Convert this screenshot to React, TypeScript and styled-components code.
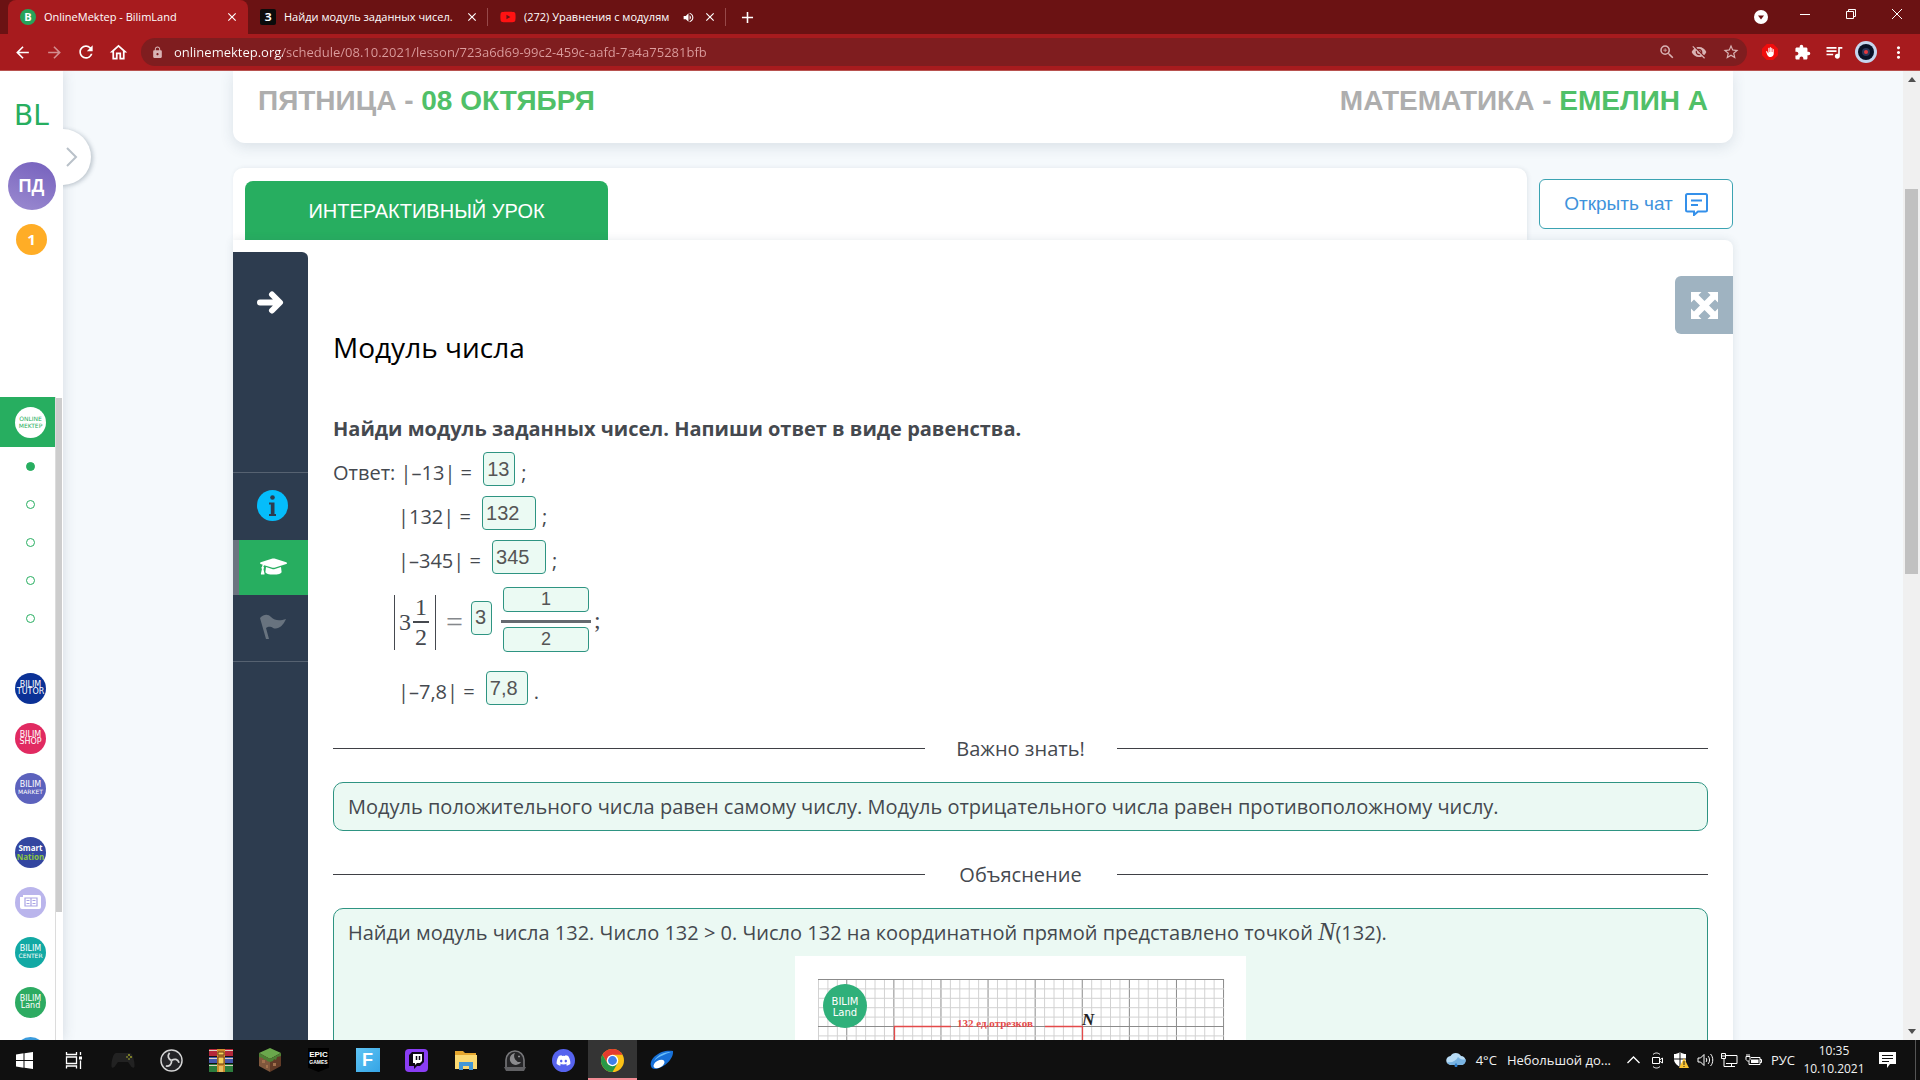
import React from "react";
import styled, { createGlobalStyle, css } from "styled-components";
import {
  MdArrowBack, MdArrowForward, MdRefresh, MdOutlineHome, MdLock, MdZoomIn, MdVisibilityOff,
  MdStarBorder, MdExtension, MdQueueMusic, MdMoreVert, MdClose, MdAdd, MdVolumeUp, MdBackHand,
} from "react-icons/md";
import { FaGraduationCap, FaDiscord, FaYoutube } from "react-icons/fa";

const ui = `"Open Sans", "Noto Sans", sans-serif`;
const arial = `"Liberation Sans", Arial, sans-serif`;
const serif = `"Liberation Serif", "Times New Roman", serif`;
const green = "#27ae60";

const Global = createGlobalStyle`
  * { box-sizing: border-box; }
  body { margin: 0; background: #f5f9fc; font-family: ${ui}; }
  button { border: 0; padding: 0; background: none; font: inherit; color: inherit; cursor: pointer; }
  p, h1, h2, h3 { margin: 0; }
  svg { display: block; flex: none; }
`;

const Screen = styled.div`
  display: flex;
  flex-direction: column;
  height: 100vh;
  overflow: hidden;
`;

/* ---------- browser chrome ---------- */
const TabStrip = styled.header`
  display: flex;
  align-items: stretch;
  height: 34px;
  flex: none;
  padding-left: 8px;
  background: #6b1213;
  color: #fff;
`;
const Tab = styled.div<{ $active?: boolean; $w: number }>`
  display: flex;
  align-items: center;
  gap: 8px;
  width: ${(p) => p.$w}px;
  padding: 0 9px 0 12px;
  font: 11px/16px ${ui};
  ${(p) => p.$active
    ? css`background: #a71b1e; border-radius: 8px 8px 0 0;`
    : css`&::after { content: ""; width: 1px; height: 18px; margin: 0 -9px 0 0; background: #97494a; }`}
`;
const TabTitle = styled.button`
  flex: 1;
  min-width: 0;
  overflow: hidden;
  white-space: nowrap;
  text-align: left;
`;
const Favicon = styled.span<{ $bg: string; $round?: boolean }>`
  display: grid;
  place-items: center;
  flex: none;
  width: 16px;
  height: 16px;
  border-radius: ${(p) => (p.$round ? "50%" : "2px")};
  background: ${(p) => p.$bg};
  font-size: 11px;
  font-weight: 700;
  line-height: 14px;
`;
const PlainButton = styled.button`
  display: grid;
  place-items: center;
  flex: none;
`;
const NewTab = styled(PlainButton)`width: 42px;`;
const WindowButtons = styled.div`
  display: flex;
  align-items: center;
  margin-left: auto;
`;
const WindowButton = styled(PlainButton)`width: 46px; height: 28px; align-self: flex-start;`;
const SearchTabs = styled(PlainButton)`width: 42px; height: 34px;`;

const Toolbar = styled.nav`
  display: flex;
  align-items: center;
  height: 37px;
  flex: none;
  padding: 0 6px;
  background: #a71b1e;
  border-bottom: 1px solid #b8524f;
  color: #fff;
`;
const ToolButton = styled(PlainButton)<{ $dim?: boolean }>`
  width: 32px;
  height: 32px;
  opacity: ${(p) => (p.$dim ? 0.5 : 1)};
`;
const AddressBar = styled.label`
  display: flex;
  align-items: center;
  flex: 1;
  height: 28px;
  margin: 0 7px;
  padding: 0 0 0 10px;
  border-radius: 14px;
  background: #7f1d1f;
  color: #d9b3b4;
`;
const AddressInput = styled.input`
  flex: 1;
  min-width: 0;
  margin-left: 10px;
  padding: 0;
  border: 0;
  outline: 0;
  font: 13px/20px ${ui};
  color: transparent;
  background: linear-gradient(90deg, #fff 109px, #dc9d9e 109px);
  background-clip: text;
`;
const AdBlock = styled.span`
  display: grid;
  place-items: center;
  width: 16px;
  height: 16px;
  background: #f00d0d;
  clip-path: polygon(30% 0, 70% 0, 100% 30%, 100% 70%, 70% 100%, 30% 100%, 0 70%, 0 30%);
`;

/* ---------- page frame ---------- */
const Body = styled.div`
  display: flex;
  flex: 1;
  min-height: 0;
  overflow: hidden;
`;
const Side = styled.aside`
  position: relative;
  z-index: 2;
  display: flex;
  flex-direction: column;
  align-items: center;
  width: 63px;
  flex: none;
  background: #fff;
  box-shadow: 0 0 12px rgba(60, 80, 100, 0.18);
`;
const Brand = styled.a`
  display: block;
  margin-top: 29px;
  height: 32px;
  font: 28px/32px "DejaVu Sans", sans-serif;
  color: ${green};
  text-decoration: none;
`;
const Toggle = styled.button`
  position: absolute;
  z-index: -1;
  top: 58px;
  right: -28px;
  display: grid;
  place-items: center end;
  width: 56px;
  height: 56px;
  padding-right: 13px;
  border-radius: 50%;
  background: #fff;
  box-shadow: 2px 1px 4px rgba(60, 80, 100, 0.3);
`;
const ToggleCover = styled.div`
  position: absolute;
  z-index: -1;
  inset: 0;
  background: #fff;
`;
const Avatar = styled.button`
  width: 48px;
  height: 48px;
  margin-top: 30px;
  border-radius: 50%;
  background: linear-gradient(20deg, #9b8bd0, #7560bd);
  font: 700 18px/48px ${arial};
  color: #fff;
`;
const Coin = styled.span`
  width: 31px;
  height: 31px;
  margin-top: 14px;
  border-radius: 50%;
  background: #ffad26;
  font: 700 15px/31px ${ui};
  color: #fff;
  text-align: center;
`;
const SideScroll = styled.div`
  display: flex;
  width: 63px;
  margin-top: 142px;
  flex: 1;
  min-height: 0;
  overflow: hidden;
`;
const SideList = styled.ul`
  flex: 1;
  margin: 0;
  padding: 0;
  list-style: none;
`;
const SideTrack = styled.div`
  width: 8px;
  border-left: 1px solid #dcdcdc;
  &::before { content: ""; display: block; width: 6px; height: 514px; margin-top: 1px; background: #cdcdcd; }
`;
const SideItem = styled.li<{ $active?: boolean; $gap?: number }>`
  display: flex;
  justify-content: center;
  align-items: center;
  height: 50px;
  margin-top: ${(p) => p.$gap ?? 0}px;
  padding-left: 6px;
  background: ${(p) => (p.$active ? green : "transparent")};
`;
const DotItem = styled(SideItem)`height: 38px;`;
const Dot = styled.button<{ $on?: boolean }>`
  width: 9px;
  height: 9px;
  border: 1px solid ${green};
  border-radius: 50%;
  background: ${(p) => (p.$on ? green : "#fff")};
`;
const Badge = styled.a<{ $bg: string; $fg?: string }>`
  display: flex;
  flex-direction: column;
  align-items: center;
  justify-content: center;
  width: 31px;
  height: 31px;
  border-radius: 50%;
  background: ${(p) => p.$bg};
  color: ${(p) => p.$fg ?? "#fff"};
  font: 8px/7px "DejaVu Sans", sans-serif;
  text-decoration: none;
`;
const BadgeLine = styled.span<{ $small?: boolean; $fg?: string; $bold?: boolean }>`
  font-size: ${(p) => (p.$small ? 6 : 8)}px;
  color: ${(p) => p.$fg ?? "inherit"};
  ${(p) => p.$bold && css`font: 700 8px/9px ${ui};`}
`;

const Page = styled.main`
  flex: 1;
  min-width: 0;
  overflow: hidden;
  padding: 0 24px;
`;
const Container = styled.div`
  display: flex;
  flex-direction: column;
  max-width: 1500px;
  min-height: 100%;
  margin: 0 auto;
`;
const PageTrack = styled.div`
  display: flex;
  flex-direction: column;
  justify-content: space-between;
  align-items: center;
  width: 17px;
  flex: none;
  padding: 6px 0;
  background: #f0f0f0;
`;
const PageThumb = styled.div`
  width: 13px;
  height: 385px;
  margin: 107px 0 auto;
  background: #c1c1c1;
`;
const DayCard = styled.section`
  display: flex;
  justify-content: space-between;
  height: 72px;
  padding: 13px 25px 0;
  border-radius: 0 0 12px 12px;
  background: #fff;
  box-shadow: 0 4px 14px rgba(50, 70, 90, 0.13);
  font: 700 28px/34px ${arial};
  color: #aeaeae;
`;
const Accent = styled.strong`color: #50c068;`;
const TabsRow = styled.div`
  display: flex;
  gap: 12px;
  margin-top: 25px;
  height: 72px;
`;
const TabsCard = styled.div`
  display: flex;
  flex: 1;
  padding: 13px 12px 0;
  border-radius: 10px 10px 0 0;
  background: #fff;
  box-shadow: 1px 0 4px rgba(50, 70, 90, 0.1);
`;
const LessonTab = styled.button`
  width: 363px;
  border-radius: 8px 8px 0 0;
  background: ${green};
  font: 20px/61px ${arial};
  color: #fff;
`;
const ChatButton = styled.button`
  display: flex;
  align-items: center;
  justify-content: center;
  gap: 12px;
  width: 194px;
  height: 50px;
  margin-top: 11px;
  border: 1px solid #3ba3b2;
  border-radius: 6px;
  background: #fff;
  font: 19px/24px ${arial};
  color: #3f93dc;
`;
const Panel = styled.section`
  display: flex;
  align-items: stretch;
  flex: 1;
  position: relative;
  padding-top: 12px;
  border-radius: 0 8px 0 0;
  background: #fff;
  box-shadow: 0 0 8px rgba(50, 70, 90, 0.12);
`;
const Rail = styled.nav`
  display: flex;
  flex-direction: column;
  width: 75px;
  flex: none;
  border-radius: 0 6px 0 0;
  background: #2d3c4f;
`;
const RailButton = styled.button<{ $h: number; $line?: "top" | "bottom"; $active?: boolean }>`
  display: grid;
  place-items: center;
  height: ${(p) => p.$h}px;
  padding: 0 0 2px 4px;
  color: #68737f;
  ${(p) => p.$line && css`border-${p.$line}: 1px solid #566271;`}
  ${(p) => p.$active && css`background: ${green}; border-left: 6px solid #6b7480; color: #fff; padding-left: 0;`}
`;
const RailArrow = styled(RailButton)`margin-bottom: 120px; padding: 0;`;
const Lesson = styled.article`
  flex: 1;
  min-width: 0;
  padding: 75px 25px 0;
  font: 20px/27px ${ui};
  color: #45494f;
`;
const Expand = styled.button`
  position: absolute;
  top: 36px;
  right: 0;
  display: grid;
  place-items: center;
  width: 58px;
  height: 58px;
  border-radius: 6px 0 0 6px;
  background: #9fb3c1;
  color: #fff;
`;
const Title = styled.h1`
  font-size: 28px;
  font-weight: 400;
  line-height: 40px;
  color: #000;
`;
const Task = styled.h2`
  margin-top: 48px;
  font-size: 20px;
  font-weight: 700;
  line-height: 27px;
`;
const Answers = styled.form`
  display: flex;
  flex-direction: column;
  gap: 10px;
  margin: 10px 0 30px;
`;
const Row = styled.div<{ $indent?: boolean }>`
  display: flex;
  align-items: flex-start;
  gap: 6px;
  height: 34px;
  padding-left: ${(p) => (p.$indent ? 65 : 0)}px;
  line-height: 42px;
  white-space: pre;
`;
const Answer = styled.input<{ $w: number }>`
  width: ${(p) => p.$w}px;
  height: 34px;
  padding: 0 3px;
  border: 1px solid #2e9482;
  border-radius: 4px;
  outline: 0;
  background: #ebfaf3;
  font: 20px ${arial};
  color: #555;
`;
const FractionAnswer = styled(Answer)`
  height: 25px;
  padding-bottom: 0;
  font-size: 18px;
  text-align: center;
`;
const WholeAnswer = styled(Answer)`margin-bottom: 4px;`;
const MathRow = styled.div`
  display: flex;
  align-items: center;
  height: 65px;
  margin: 3px 0 9px;
  padding-left: 61px;
  font: 24px/28px ${serif};
`;
const Abs = styled.span`
  display: flex;
  align-items: center;
  height: 55px;
  margin-top: 5px;
  padding: 0 6px 0 4px;
  border: solid #45494f;
  border-width: 0 1px;
`;
const Fraction = styled.span`
  display: flex;
  flex-direction: column;
  align-items: center;
  margin-left: 2px;
`;
const Numerator = styled.span`
  width: 16px;
  border-bottom: 2px solid #45494f;
  text-align: center;
`;
const Equals = styled.span`margin: 4px 8px 0 10px; font-size: 30px; color: #85888c;`;
const BoxFraction = styled.span`
  display: flex;
  flex-direction: column;
  align-items: center;
  width: 90px;
  margin-left: 9px;
`;
const Bar = styled.span`width: 100%; height: 3px; margin: 8px 0 4px; background: #666a70;`;
const Semicolon = styled.span`margin-left: 3px;`;
const Rule = styled.h3`
  display: flex;
  align-items: center;
  font-size: 20px;
  font-weight: 400;
  line-height: 27px;
  &::before, &::after { content: ""; flex: 1; height: 1px; background: #3f4045; }
`;
const RuleText = styled.span`width: 192px; text-align: center;`;
const Note = styled.section<{ $open?: boolean }>`
  margin: 20px 0 ${(p) => (p.$open ? 0 : 30)}px;
  padding: 10px 14px;
  border: 1px solid #2e9482;
  border-radius: 10px;
  background: #ebf9f3;
`;
const Var = styled.i`font: italic 26px/20px ${serif};`;
const Figure = styled.svg`margin: 10px auto 0;`;

/* ---------- taskbar ---------- */
const Taskbar = styled.footer`
  position: relative;
  z-index: 3;
  display: flex;
  align-items: stretch;
  height: 40px;
  flex: none;
  background: #101010;
  color: #f2f2f2;
  font: 13px/20px ${ui};
`;
const TaskButton = styled(PlainButton)<{ $active?: boolean }>`
  width: 49px;
  ${(p) => p.$active && css`background: #343434; box-shadow: inset 0 -2px #f28b94;`}
`;
const Tray = styled.div`
  display: flex;
  align-items: center;
  margin-left: auto;
`;
const TrayButton = styled(PlainButton)`width: 24px; height: 40px;`;
const Weather = styled.button`
  display: flex;
  align-items: center;
  gap: 10px;
  margin-right: 10px;
`;
const Lang = styled.button`width: 30px; text-align: right;`;
const Clock = styled.time`
  width: 78px;
  font-size: 12px;
  line-height: 18px;
  text-align: center;
  white-space: pre-line;
`;
const Notice = styled(PlainButton)`width: 28px;`;
const ShowDesktop = styled.button`width: 5px; height: 40px; margin-left: 14px; border-left: 1px solid #555;`;

const Brackets = ({ name, value, width, end, indent = true }: { name: string; value: string; width: number; end: string; indent?: boolean }) => (
  <Row $indent={indent}>
    <span>{(indent ? "" : "Ответ: ") + `|${name}| = `}</span>
    <Answer $w={width} defaultValue={value} aria-label={`Модуль ${name}`} />
    <span>{end}</span>
  </Row>
);

const sites = [
  { a: "BILIM", b: "TUTOR", bg: "#0b3196", gap: 26 },
  { a: "BILIM", b: "SHOP", bg: "#e12a61" },
  { a: "BILIM", b: "MARKET", bg: "#5c62bd", small: true },
  { a: "Smart", b: "Nation", bg: "#3346a0", gap: 14, fg: "#8cc63f", bold: true },
  { news: true, bg: "#bab5ec" },
  { a: "BILIM", b: "CENTER", bg: "#12a9a4", small: true },
  { a: "BILIM", b: "Land", bg: "#2dab62" },
  { bg: "#3b9bdc" },
] as Array<{ a?: string; b?: string; bg: string; gap?: number; small?: boolean; fg?: string; bold?: boolean; news?: boolean }>;

const NewsIcon = () => (
  <svg width="21" height="14" viewBox="0 0 21 14">
    <path d="M3 0h16a2 2 0 0 1 2 2v10a2 2 0 0 1-2 2H2a2 2 0 0 1-2-2V2h3z" fill="#fff" />
    <path d="M5 3h12v8H5zM11 3v8M6.500 5.500h3M12.500 5.500h3M6.500 8.500h3M12.500 8.500h3" fill="none" stroke="#aaa4e4" strokeWidth="1.200" />
  </svg>
);

const NumberLine = () => {
  const cells = Array.from({ length: 44 }, (_, i) => i);
  return (
    <Figure width="451" height="240" viewBox="0 0 451 240" role="img" aria-label="Координатная прямая">
      <rect width="451" height="240" fill="#fff" />
      {cells.map((i) => {
        const x = 23.500 + i * 9.420;
        return <line key={i} x1={x} x2={x} y1="23" y2="240" stroke={i % 5 === 3 ? "#8b8b8b" : "#d2d2d2"} />;
      })}
      {Array.from({ length: 23 }, (_, i) => {
        const y = 23.500 + i * 9.400;
        return <line key={i} x1="23" x2="429" y1={y} y2={y} stroke={i % 5 === 0 ? "#8b8b8b" : "#d2d2d2"} />;
      })}
      <path d="M99.500 240V70.500H156M250 70.500h37.500V240" fill="none" stroke="#e44a4a" strokeWidth="1.300" />
      <circle cx="50" cy="50" r="22" fill="#2fb07a" />
      <text x="50" y="49" fontSize="10" fill="#fff" textAnchor="middle" fontFamily="DejaVu Sans">BILIM</text>
      <text x="50" y="60" fontSize="10" fill="#fff" textAnchor="middle" fontFamily="DejaVu Sans">Land</text>
      <text x="200" y="71" fontSize="11" fill="#e44a4a" textAnchor="middle" fontFamily="Liberation Serif" fontWeight="700">132 ед.отрезков</text>
      <text x="287" y="69" fontSize="17" fill="#222" fontFamily="Liberation Serif" fontStyle="italic" fontWeight="700">N</text>
    </Figure>
  );
};

const InfoIcon = () => (
  <svg width="31" height="31" viewBox="0 0 31 31">
    <circle cx="15.500" cy="15.500" r="15.500" fill="#05bdfb" />
    <circle cx="15.500" cy="7.500" r="2.300" fill="#2d3c4f" />
    <path d="M12 12.500h5.500V24H19v2h-7v-2h1.800v-9.500H12z" fill="#2d3c4f" />
  </svg>
);
const ExpandIcon = () => (
  <svg width="27" height="27" viewBox="0 0 27 27" fill="#fff">
    <path d="M0 0h10.500L7.500 3 13.500 9 19.500 3l-3-3H27v10.500l-3-3-6 6 6 6 3-3V27H16.500l3-3-6-6-6 6 3 3H0V16.500l3 3 6-6-6-6-3 3z" />
  </svg>
);
const WindowsIcon = () => (
  <svg width="17" height="17" viewBox="0 0 17 17" fill="#fff"><path d="M0 2.400 7.500 1.300V8H0zM8.500 1.200 17 0v8H8.500zM0 9h7.500v6.700L0 14.600zM8.500 9H17v8l-8.500-1.200z" /></svg>
);
const TaskViewIcon = () => (
  <svg width="18" height="18" viewBox="0 0 18 18" fill="none" stroke="#fff" strokeWidth="1.300"><path d="M1.500 1v2.500h10V1M1.500 6h10v6.500h-10zM1.500 17.500V15h10v2.500M15.500 1v3M15.500 9.500V18" /><path d="M14 5.500h3v3h-3z" fill="#fff" stroke="none" /></svg>
);
const GamepadIcon = () => (
  <svg width="26" height="20" viewBox="0 0 26 20"><path d="M6 3h14c3 0 5 10 4.500 13.500-.5 2.500-3 1-4-1L18 12H8l-2.500 3.500c-1 2-3.500 3.500-4 1C1 13 3 3 6 3z" fill="#222" /><circle cx="19" cy="5" r="1" fill="#989b2b" /><circle cx="21" cy="7" r="1" fill="#989b2b" /><circle cx="17" cy="7" r="1" fill="#777b2b" /><circle cx="19" cy="9" r="1" fill="#777b2b" /></svg>
);
const ObsIcon = () => (
  <svg width="23" height="23" viewBox="0 0 24 24" fill="none" stroke="#d5d5d5">
    <circle cx="12" cy="12" r="11" strokeWidth="1.500" fill="#242427" />
    {[0, 120, 240].map((a) => <path key={a} d="M12 12C8.500 10.500 7.500 7 10 4" strokeWidth="1.800" transform={`rotate(${a} 12 12)`} />)}
  </svg>
);
const RarIcon = () => (
  <svg width="24" height="23" viewBox="0 0 24 23"><path d="M0 0h24v7H0z" fill="#b5283a" /><path d="M0 8h24v6H0z" fill="#4458ad" /><path d="M0 15h24v8H0z" fill="#2c7d3d" /><path d="M0 1.500h24M0 9.500h24M0 16.500h24" stroke="#ddd2c0" /><path d="M8 0h8v23H8z" fill="#cf8b2c" /><path d="M9 3h6v3H9zM9 8h6v7H9z" fill="#f5d25a" stroke="#6d3c18" /><path d="M10 17h4v6h-4z" fill="#e6bd61" /></svg>
);
const MinecraftIcon = () => (
  <svg width="24" height="24" viewBox="0 0 24 24"><path d="m12 0 11 5-11 6L1 5z" fill="#6aa84c" /><path d="m1 5 11 6v13L1 18z" fill="#80583d" /><path d="m23 5-11 6v13l11-6z" fill="#623b27" /><path d="m1 5 11 6v3l-3-1-1-2-2 1-1-2-4-1zm22 0-11 6v3l3-1 1-2 2 1 1-3 4-1z" fill="#4b8133" /><path d="M4 12h3v3H4zM15 15h3v3h-3zM8 17h2v3H8z" fill="#a3714d" /></svg>
);
const TwitchIcon = () => (
  <svg width="15" height="17" viewBox="0 0 15 17"><path d="M3 0h12v10l-4 4H8l-3 3v-3H0V3z" fill="#0d0716" /><path d="M4 2h9v7l-2 2H8l-2 2v-2H4z" fill="#fff" /><path d="M7.500 4v4M10.500 4v4" stroke="#0d0716" strokeWidth="1.500" /></svg>
);
const EpicTile = styled.span`
  display: flex;
  flex-direction: column;
  align-items: center;
  width: 21px;
  height: 24px;
  padding-top: 2px;
  background: #000;
  clip-path: polygon(0 0, 100% 0, 100% 82%, 50% 100%, 0 82%);
  font: 700 8px/10px ${arial};
  color: #fff;
`;
const EpicSmall = styled.span`font-size: 5px; line-height: 5px;`;
const FortniteTile = styled.span`
  width: 24px;
  height: 24px;
  background: linear-gradient(135deg, #5fc5f5, #35a4e5);
  font: 700 18px/24px ${arial};
  color: #fff;
`;
const TwitchTile = styled.span`
  display: grid;
  place-items: center;
  width: 23px;
  height: 23px;
  border-radius: 4px;
  background: #8a3df4;
`;
const DiscordTile = styled(TwitchTile)`border-radius: 50%; background: #5663ee;`;
const FolderIcon = () => (
  <svg width="22" height="19" viewBox="0 0 22 19"><path d="M0 0h8l2 2h11v16H0z" fill="#e5a62e" /><path d="M0 4h22v14H0z" fill="#fbd972" /><path d="M4 19v-8h14v8h-4v-4H8v4z" fill="#4297d6" /></svg>
);
const MoonIcon = () => (
  <svg width="24" height="23" viewBox="0 0 24 23"><path d="M3 18V11a9 9 0 0 1 18 0v7" fill="#252527" stroke="#77777a" strokeWidth="1.600" /><path d="M12 4a6 6 0 1 0 6 9 6 6 0 0 1-6-9z" fill="#8b8b8e" /><path d="M15 7.500h2M16 6.500v2" stroke="#8b8b8e" /><path d="M1 18h22l-2 4H3z" fill="#616164" /></svg>
);
const ChromeIcon = () => (
  <svg width="23" height="23" viewBox="0 0 24 24"><circle cx="12" cy="12" r="12" fill="#fbc116" /><path d="M12 12 6.800 15 1.600 6A12 12 0 0 1 22.400 6H12z" fill="#e33b2e" /><path d="M1.600 6a12 12 0 0 0 10.400 18l5.200-9L12 12l-5.200 3z" fill="#279847" /><circle cx="12" cy="12" r="6" fill="#fff" /><circle cx="12" cy="12" r="4.600" fill="#3f7fe8" /></svg>
);
const CometIcon = () => (
  <svg width="26" height="22" viewBox="0 0 26 22"><path d="M2 17C0 9 12 0 24 2c1 7-8 17-18 18-2 0-4-1-4-3z" fill="#1770d8" /><path d="M5 12C9 5 16 3 22 3c-5 2-12 4-17 9z" fill="#67bdfa" /><ellipse cx="10" cy="15" rx="6" ry="3.500" transform="rotate(-30 10 15)" fill="#fff" /></svg>
);

const tasks = [
  ["Пуск", <WindowsIcon />], ["Представление задач", <TaskViewIcon />], ["Геймпад", <GamepadIcon />], ["OBS", <ObsIcon />],
  ["WinRAR", <RarIcon />], ["Minecraft", <MinecraftIcon />],
  ["Epic Games", <EpicTile>EPIC<EpicSmall>GAMES</EpicSmall></EpicTile>],
  ["Fortnite", <FortniteTile>F</FortniteTile>],
  ["Twitch", <TwitchTile><TwitchIcon /></TwitchTile>],
  ["Проводник", <FolderIcon />], ["Moon", <MoonIcon />],
  ["Discord", <DiscordTile><FaDiscord size={15} color="#fff" /></DiscordTile>],
  ["Chrome", <ChromeIcon />], ["Comet", <CometIcon />],
] as Array<[string, React.ReactNode]>;

export default function App() {
  return (
    <Screen>
      <Global />
      <TabStrip>
        <Tab $active $w={240}>
          <Favicon $bg="#27a35a" $round>B</Favicon>
          <TabTitle>OnlineMektep - BilimLand</TabTitle>
          <PlainButton aria-label="Закрыть вкладку"><MdClose size={14} /></PlainButton>
        </Tab>
        <Tab $w={240}>
          <Favicon $bg="#0b0b0b">З</Favicon>
          <TabTitle>Найди модуль заданных чисел.</TabTitle>
          <PlainButton aria-label="Закрыть вкладку"><MdClose size={14} /></PlainButton>
        </Tab>
        <Tab $w={238}>
          <FaYoutube size={16} color="#ff1212" />
          <TabTitle>(272) Уравнения с модулям</TabTitle>
          <MdVolumeUp size={13} />
          <PlainButton aria-label="Закрыть вкладку"><MdClose size={14} /></PlainButton>
        </Tab>
        <NewTab aria-label="Новая вкладка"><MdAdd size={19} /></NewTab>
        <WindowButtons>
          <SearchTabs aria-label="Поиск вкладок">
            <svg width="14" height="14" viewBox="0 0 14 14"><circle cx="7" cy="7" r="7" fill="#fff" /><path d="M4 5.500h6l-3 4z" fill="#6b1213" /></svg>
          </SearchTabs>
          <WindowButton aria-label="Свернуть"><svg width="10" height="10"><path d="M0 5.500h10" stroke="#fff" /></svg></WindowButton>
          <WindowButton aria-label="Восстановить"><svg width="10" height="10" fill="none" stroke="#fff"><path d="M.5 2.500h7v7h-7zM2.500 2.500v-2h7v7h-2" /></svg></WindowButton>
          <WindowButton aria-label="Закрыть"><svg width="10" height="10" stroke="#fff"><path d="m0 0 10 10M10 0 0 10" /></svg></WindowButton>
        </WindowButtons>
      </TabStrip>
      <Toolbar>
        <ToolButton aria-label="Назад"><MdArrowBack size={19} /></ToolButton>
        <ToolButton aria-label="Вперёд" $dim><MdArrowForward size={19} /></ToolButton>
        <ToolButton aria-label="Обновить"><MdRefresh size={20} /></ToolButton>
        <ToolButton aria-label="Домой"><MdOutlineHome size={21} /></ToolButton>
        <AddressBar>
          <MdLock size={13} />
          <AddressInput aria-label="Адрес" defaultValue="onlinemektep.org/schedule/08.10.2021/lesson/723a6d69-99c2-459c-aafd-7a4a75281bfb" />
          <ToolButton aria-label="Масштаб"><MdZoomIn size={18} /></ToolButton>
          <ToolButton aria-label="Cookie"><MdVisibilityOff size={16} /></ToolButton>
          <ToolButton aria-label="Закладка"><MdStarBorder size={18} /></ToolButton>
        </AddressBar>
        <ToolButton aria-label="AdBlock"><AdBlock><MdBackHand size={10} /></AdBlock></ToolButton>
        <ToolButton aria-label="Расширения"><MdExtension size={17} /></ToolButton>
        <ToolButton aria-label="Медиа"><MdQueueMusic size={20} /></ToolButton>
        <ToolButton aria-label="Профиль">
          <svg width="22" height="22" viewBox="0 0 22 22"><circle cx="11" cy="11" r="11" fill="#c5d6ee" /><circle cx="11" cy="11" r="8" fill="#081126" /><circle cx="11" cy="11" r="4" fill="#2b3558" /><circle cx="11" cy="11" r="2" fill="#e8383e" /></svg>
        </ToolButton>
        <ToolButton aria-label="Меню"><MdMoreVert size={19} /></ToolButton>
      </Toolbar>

      <Body>
        <Side>
          <Toggle aria-label="Развернуть меню">
            <svg width="12" height="20" viewBox="0 0 12 20" fill="none" stroke="#b9c1c9" strokeWidth="2"><path d="m1 1 9 9-9 9" /></svg>
          </Toggle>
          <ToggleCover />
          <Brand href="#">BL</Brand>
          <Avatar>ПД</Avatar>
          <Coin>1</Coin>
          <SideScroll>
            <SideList>
              <SideItem $active>
                <Badge href="#" $bg="#fff" $fg={green}><BadgeLine $small>ONLINE</BadgeLine><BadgeLine $small>MEKTEP</BadgeLine></Badge>
              </SideItem>
              {[0, 1, 2, 3, 4].map((i) => <DotItem key={i}><Dot $on={i === 0} aria-label={`Раздел ${i + 1}`} /></DotItem>)}
              {sites.map((s, i) => (
                <SideItem key={i} $gap={s.gap}>
                  <Badge href="#" $bg={s.bg} aria-label={s.a ? `${s.a} ${s.b}` : "Новости"}>
                    {s.news && <NewsIcon />}
                    {s.a && <BadgeLine $bold={s.bold}>{s.a}</BadgeLine>}
                    {s.b && <BadgeLine $small={s.small} $fg={s.fg} $bold={s.bold}>{s.b}</BadgeLine>}
                  </Badge>
                </SideItem>
              ))}
            </SideList>
            <SideTrack />
          </SideScroll>
        </Side>

        <Page>
          <Container>
            <DayCard>
              <span>ПЯТНИЦА - <Accent>08 ОКТЯБРЯ</Accent></span>
              <span>МАТЕМАТИКА - <Accent>ЕМЕЛИН А</Accent></span>
            </DayCard>
            <TabsRow>
              <TabsCard><LessonTab>ИНТЕРАКТИВНЫЙ УРОК</LessonTab></TabsCard>
              <ChatButton>
                Открыть чат
                <svg width="23" height="23" viewBox="0 0 23 23" fill="none" stroke="#3490ea" strokeWidth="2"><path d="M2.500 1h18A1.500 1.500 0 0 1 22 2.500V17a1.500 1.500 0 0 1-1.500 1.500H13l-4 3.500v-3.500H2.500A1.500 1.500 0 0 1 1 17V2.500A1.500 1.500 0 0 1 2.500 1zM6 7.500h11M6 12h7" /></svg>
              </ChatButton>
            </TabsRow>
            <Panel>
              <Rail>
                <RailArrow $h={100} aria-label="Дальше">
                  <svg width="27" height="23" viewBox="0 0 27 23" fill="none" stroke="#fff" strokeWidth="6" strokeLinecap="round" strokeLinejoin="round"><path d="M3 11.500h18M15 3.500l8 8-8 8" /></svg>
                </RailArrow>
                <RailButton $h={68} $line="top" aria-label="Информация"><InfoIcon /></RailButton>
                <RailButton $h={55} $active aria-label="Урок"><FaGraduationCap size={27} /></RailButton>
                <RailButton $h={67} $line="bottom" aria-label="Итог">
                  <svg width="28" height="26" viewBox="0 0 28 26" fill="currentColor"><path d="M1 4C5 0 9 0 12 3c4 4 9 4 15 2-3 7-8 11-13 9-3-2-5-1-7 0l3 11H7z" /></svg>
                </RailButton>
              </Rail>
              <Lesson>
                <Title>Модуль числа</Title>
                <Task>Найди модуль заданных чисел. Напиши ответ в виде равенства.</Task>
                <Answers>
                  <Brackets name="–13" value="13" width={32} end=";" indent={false} />
                  <Brackets name="132" value="132" width={54} end=";" />
                  <Brackets name="–345" value="345" width={54} end=";" />
                  <MathRow>
                    <Abs>3<Fraction><Numerator>1</Numerator><span>2</span></Fraction></Abs>
                    <Equals>=</Equals>
                    <WholeAnswer $w={21} defaultValue="3" aria-label="Целая часть" />
                    <BoxFraction>
                      <FractionAnswer $w={86} defaultValue="1" aria-label="Числитель" />
                      <Bar />
                      <FractionAnswer $w={86} defaultValue="2" aria-label="Знаменатель" />
                    </BoxFraction>
                    <Semicolon>;</Semicolon>
                  </MathRow>
                  <Brackets name="–7,8" value="7,8" width={42} end="." />
                </Answers>
                <Rule><RuleText>Важно знать!</RuleText></Rule>
                <Note><p>Модуль положительного числа равен самому числу. Модуль отрицательного числа равен противоположному числу.</p></Note>
                <Rule><RuleText>Объяснение</RuleText></Rule>
                <Note $open>
                  <p>Найди модуль числа 132. Число 132 &gt; 0. Число 132 на координатной прямой представлено точкой <Var>N</Var>(132).</p>
                  <NumberLine />
                </Note>
              </Lesson>
              <Expand aria-label="Развернуть"><ExpandIcon /></Expand>
            </Panel>
          </Container>
        </Page>
        <PageTrack>
          <svg width="8" height="5"><path d="M0 5 4 0l4 5z" fill="#505050" /></svg>
          <PageThumb />
          <svg width="8" height="5"><path d="M0 0h8L4 5z" fill="#505050" /></svg>
        </PageTrack>
      </Body>

      <Taskbar>
        {tasks.map(([name, icon]) => <TaskButton key={name} aria-label={name} $active={name === "Chrome"}>{icon}</TaskButton>)}
        <Tray>
          <Weather>
            <svg width="20" height="16" viewBox="0 0 20 16"><path d="M5 13a4.500 4.500 0 0 1-.5-9A6 6 0 0 1 15 4a4.500 4.500 0 0 1 0 9z" fill="#b8dcf6" /><path d="M5 13a4.500 4.500 0 0 1-4-3c5 1 9-1 11-5 3 3 6 3 7.500 2A4.500 4.500 0 0 1 15 13z" fill="#78b3e2" /><path d="M10 11c2 2 2 4 0 4s-2-2 0-4z" fill="#2c7cc9" /></svg>
            <span>4°C</span><span>Небольшой до...</span>
          </Weather>
          <TrayButton aria-label="Скрытые значки"><svg width="13" height="8" fill="none" stroke="#fff" strokeWidth="1.300"><path d="m.5 7 6-6 6 6" /></svg></TrayButton>
          <TrayButton aria-label="Камера"><svg width="13" height="17" viewBox="0 0 13 17" fill="none" stroke="#fff"><path d="M1.500 5.500h7v6h-7zM8.500 8l3-2v5l-3-2M2 2.500c2-2 5-2 7 0M2 14.500c2 2 5 2 7 0" /></svg></TrayButton>
          <TrayButton aria-label="Безопасность"><svg width="16" height="16" viewBox="0 0 16 16"><path d="M7 0c2 1.500 4 2 6 2v5c0 4-3 6-6 8-3-2-6-4-6-8V2c2 0 4-.5 6-2z" fill="#fff" /><path d="M7 0v15M1 7h12" stroke="#101010" /><path d="m11 6 5 10H6z" fill="#f9c231" /><path d="M11 9v4M11 14v1" stroke="#222" /></svg></TrayButton>
          <TrayButton aria-label="Громкость"><svg width="17" height="14" viewBox="0 0 17 14" fill="none" stroke="#fff"><path d="M1 5h2.500L7 1.500v11L3.500 9H1zM9 5c1 1 1 3 0 4M11 3c2 2 2 6 0 8M13.500 1c3 3 3 9 0 12" /></svg></TrayButton>
          <TrayButton aria-label="Сеть"><svg width="17" height="14" viewBox="0 0 17 14" fill="none" stroke="#fff"><path d="M5 2.500h11v8H5M3 6v7.500h11M10.500 10.500v3M.5.500h4v5h-4zM.5 3h4" /></svg></TrayButton>
          <TrayButton aria-label="Батарея"><svg width="17" height="12" viewBox="0 0 17 12" fill="none" stroke="#fff"><path d="M6 3.500h9v7H4V7M15 5.500h1.500v3H15M1 2.500h4v3l-2 2-2-2zM2 0v2M4 0v2" /><path d="M6 5.500h7.500v3.500H6z" fill="#fff" stroke="none" /></svg></TrayButton>
          <Lang>РУС</Lang>
          <Clock>{"10:35\n10.10.2021"}</Clock>
          <Notice aria-label="Уведомления"><svg width="17" height="16" viewBox="0 0 17 16"><path d="M0 0h17v12h-6l-3 4v-4H0z" fill="#fff" /><path d="M3 3.500h11M3 6.500h11M3 9.500h7" stroke="#101010" /></svg></Notice>
          <ShowDesktop aria-label="Показать рабочий стол" />
        </Tray>
      </Taskbar>
    </Screen>
  );
}
